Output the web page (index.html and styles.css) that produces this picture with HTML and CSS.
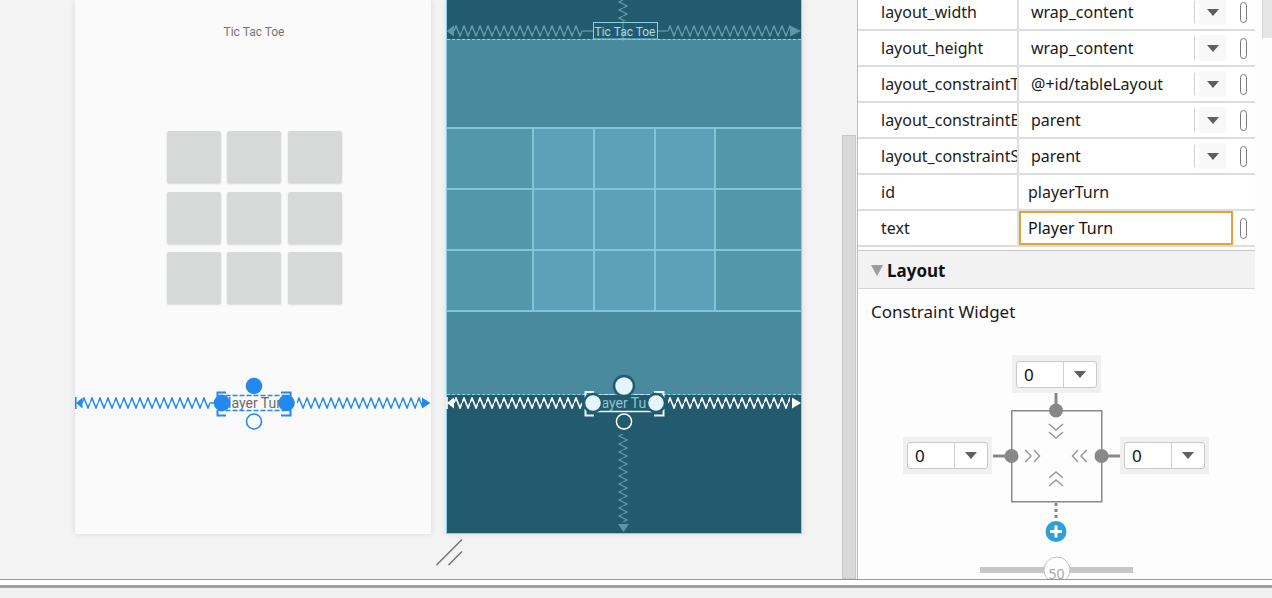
FILE: index.html
```html
<!DOCTYPE html>
<html>
<head>
<meta charset="utf-8">
<title>Layout editor</title>
<link rel="stylesheet" href="styles.css">
</head>
<body>
<div class="main">
  <div class="canvas">
    <div class="screen design">
      <div class="d-title">Tic Tac Toe</div>
      <div class="d-grid">
        <div class="d-btn"></div><div class="d-btn"></div><div class="d-btn"></div>
        <div class="d-btn"></div><div class="d-btn"></div><div class="d-btn"></div>
        <div class="d-btn"></div><div class="d-btn"></div><div class="d-btn"></div>
      </div>
      <svg class="overlay" width="356" height="534" viewBox="0 0 356 534">
        <defs>
          <pattern id="zzBlue" width="8" height="12" patternUnits="userSpaceOnUse">
            <polyline points="0,6 2,1 6,11 8,6" fill="none" stroke="#2389ee" stroke-width="1.5"/>
          </pattern>
        </defs>
        <line x1="0.8" y1="397" x2="0.8" y2="409" stroke="#2389ee" stroke-width="1.6"/>
        <polygon points="1,403 7.5,397.5 7.5,408.5" fill="#2389ee"/>
        <g transform="translate(7,397)"><rect width="128" height="12" fill="url(#zzBlue)"/></g>
        <line x1="135" y1="403" x2="142" y2="403" stroke="#2389ee" stroke-width="1.5"/>
        <g transform="translate(222,397)"><rect width="125" height="12" fill="url(#zzBlue)"/></g>
        <polygon points="347,397.5 355.5,403 347,408.5" fill="#2389ee"/>
        <text x="179" y="408" text-anchor="middle" class="sv-text" fill="#6b6b6b">Player Turn</text>
        <rect x="143.5" y="395.5" width="72" height="15" fill="none" stroke="#2389ee" stroke-width="1.5" stroke-dasharray="5 2"/>
        <polyline points="142.5,398 142.5,392.5 151,392.5" fill="none" stroke="#2389ee" stroke-width="2"/>
        <polyline points="142.5,410 142.5,415.5 151,415.5" fill="none" stroke="#2389ee" stroke-width="2"/>
        <polyline points="206,392.5 215.5,392.5 215.5,398" fill="none" stroke="#2389ee" stroke-width="2"/>
        <polyline points="206,415.5 215.5,415.5 215.5,410" fill="none" stroke="#2389ee" stroke-width="2"/>
        <circle cx="147" cy="403" r="8.3" fill="#2389ee"/>
        <circle cx="211.5" cy="403" r="8.3" fill="#2389ee"/>
        <circle cx="179" cy="386" r="8.3" fill="#2389ee"/>
        <circle cx="179" cy="421.5" r="7.5" fill="#fafafa" stroke="#2389ee" stroke-width="1.6"/>
      </svg>
    </div>

    <div class="screen blueprint">
      <div class="bp-top"></div>
      <div class="bp-table">
        <div class="bp-pad-top"></div>
        <div class="bp-row">
          <div class="bp-cell side first"></div><div class="bp-cell mid c2"></div><div class="bp-cell mid c3"></div><div class="bp-cell mid c4"></div><div class="bp-cell side last"></div>
        </div>
        <div class="bp-row">
          <div class="bp-cell side first"></div><div class="bp-cell mid c2"></div><div class="bp-cell mid c3"></div><div class="bp-cell mid c4"></div><div class="bp-cell side last"></div>
        </div>
        <div class="bp-row">
          <div class="bp-cell side first"></div><div class="bp-cell mid c2"></div><div class="bp-cell mid c3"></div><div class="bp-cell mid c4"></div><div class="bp-cell side last"></div>
        </div>
        <div class="bp-pad-bottom"></div>
      </div>
      <div class="bp-bottom"></div>
      <svg class="overlay bp-overlay" width="356" height="534" viewBox="0 0 356 534">
        <defs>
          <pattern id="zzMuted" width="8" height="12" patternUnits="userSpaceOnUse">
            <polyline points="0,6 2,1 6,11 8,6" fill="none" stroke="#6a9fb0" stroke-width="1.3"/>
          </pattern>
          <pattern id="zzMutedV" width="12" height="8" patternUnits="userSpaceOnUse">
            <polyline points="6,0 2,2 10,6 6,8" fill="none" stroke="#5f95a7" stroke-width="1.3"/>
          </pattern>
          <pattern id="zzWhite" width="8" height="12" patternUnits="userSpaceOnUse">
            <polyline points="0,6 2,1 6,11 8,6" fill="none" stroke="#ffffff" stroke-width="1.6"/>
          </pattern>
        </defs>
        <g transform="translate(171,0)"><rect width="12" height="21" fill="url(#zzMutedV)"/></g>
        <line x1="177" y1="21" x2="177" y2="38" stroke="#6a9fb0" stroke-width="1"/>
        <polygon points="174,38 180,38 177,42" fill="#6a9fb0"/>
        <polygon points="0.5,31 8,25.5 8,36.5" fill="#5f95a7"/>
        <g transform="translate(8,25)"><rect width="128" height="12" fill="url(#zzMuted)"/></g>
        <line x1="136" y1="31" x2="147" y2="31" stroke="#6a9fb0" stroke-width="1.2"/>
        <line x1="212" y1="31" x2="222" y2="31" stroke="#6a9fb0" stroke-width="1.2"/>
        <g transform="translate(222,25)"><rect width="122" height="12" fill="url(#zzMuted)"/></g>
        <polygon points="344,25.5 355,31 344,36.5" fill="#5f95a7"/>
        <rect x="147.5" y="22.5" width="64" height="16.5" fill="none" stroke="#8ad0e6" stroke-width="1"/>
        <text x="179" y="35.5" text-anchor="middle" class="sv-text small" fill="#a3dcec">Tic Tac Toe</text>

        <line x1="1" y1="397" x2="1" y2="409" stroke="#ffffff" stroke-width="1.6"/>
        <polygon points="1,403 8,397.5 8,408.5" fill="#ffffff"/>
        <g transform="translate(8,397)"><rect width="128" height="12" fill="url(#zzWhite)"/></g>
        <g transform="translate(222,397)"><rect width="122" height="12" fill="url(#zzWhite)"/></g>
        <polygon points="346,397.5 355,403 346,408.5" fill="#ffffff"/>
        <text x="178" y="408" text-anchor="middle" class="sv-text" fill="#8cc3d3">Player Turn</text>
        <line x1="146" y1="394.5" x2="210" y2="394.5" stroke="#b8e4f0" stroke-width="1" stroke-dasharray="4 2"/>
        <line x1="146" y1="411.5" x2="210" y2="411.5" stroke="#e8f7fc" stroke-width="1.5"/>
        <polyline points="139.5,398 139.5,392 148,392" fill="none" stroke="#e8f7fc" stroke-width="2"/>
        <polyline points="139.5,409 139.5,415.5 148,415.5" fill="none" stroke="#e8f7fc" stroke-width="2"/>
        <polyline points="208,392 217.5,392 217.5,398" fill="none" stroke="#e8f7fc" stroke-width="2"/>
        <polyline points="208,415.5 217.5,415.5 217.5,409" fill="none" stroke="#e8f7fc" stroke-width="2"/>
        <circle cx="147" cy="403" r="9" fill="#e4f6fc" stroke="#235b6e" stroke-width="2.5"/>
        <circle cx="210" cy="403" r="9" fill="#e4f6fc" stroke="#235b6e" stroke-width="2.5"/>
        <circle cx="178" cy="386" r="10" fill="#e4f6fc" stroke="#235b6e" stroke-width="2.5"/>
        <circle cx="178" cy="421.5" r="7.6" fill="none" stroke="#ffffff" stroke-width="1.5"/>
        <g transform="translate(171,434)"><rect width="12" height="88" fill="url(#zzMutedV)"/></g>
        <polygon points="172,524 183,524 177.5,532" fill="#5f95a7"/>
      </svg>
    </div>

    <div class="vscroll"></div>
    <svg class="resize" width="27" height="27" viewBox="0 0 27 27">
      <line x1="0.5" y1="26" x2="26" y2="0.5" stroke="#707070" stroke-width="1.4"/>
      <line x1="12.5" y1="26" x2="26" y2="12.5" stroke="#707070" stroke-width="1.4"/>
    </svg>
  </div>

  <div class="attrs">
    <div class="attr-list">
      <div class="row">
        <div class="name">layout_width</div>
        <div class="value"><span class="vtext">wrap_content</span><span class="sep"></span><span class="arrowbox"><span class="tri"></span></span><span class="oval"></span></div>
      </div>
      <div class="row">
        <div class="name">layout_height</div>
        <div class="value"><span class="vtext">wrap_content</span><span class="sep"></span><span class="arrowbox"><span class="tri"></span></span><span class="oval"></span></div>
      </div>
      <div class="row">
        <div class="name">layout_constraintT</div>
        <div class="value"><span class="vtext">@+id/tableLayout</span><span class="sep"></span><span class="arrowbox"><span class="tri"></span></span><span class="oval"></span></div>
      </div>
      <div class="row">
        <div class="name">layout_constraintE</div>
        <div class="value"><span class="vtext">parent</span><span class="sep"></span><span class="arrowbox"><span class="tri"></span></span><span class="oval"></span></div>
      </div>
      <div class="row">
        <div class="name">layout_constraintS</div>
        <div class="value"><span class="vtext">parent</span><span class="sep"></span><span class="arrowbox"><span class="tri"></span></span><span class="oval"></span></div>
      </div>
      <div class="row">
        <div class="name">id</div>
        <div class="value"><span class="vtext plain">playerTurn</span></div>
      </div>
      <div class="row">
        <div class="name">text</div>
        <div class="value"><span class="tf">Player Turn</span><span class="oval"></span></div>
      </div>
    </div>

    <div class="section"><span class="sec-tri"></span><span class="sec-title">Layout</span></div>
    <div class="cw-label">Constraint Widget</div>

    <div class="cw">
      <div class="dd dd-top"><div class="dd-in"><span class="dd-val">0</span><span class="dd-arrow"><span class="tri small"></span></span></div></div>
      <div class="dd dd-left"><div class="dd-in"><span class="dd-val">0</span><span class="dd-arrow"><span class="tri small"></span></span></div></div>
      <svg class="cw-svg" width="127" height="152" viewBox="0 0 127 152">
        <line x1="63" y1="0" x2="63" y2="17" stroke="#888" stroke-width="3"/>
        <line x1="0" y1="63" x2="18" y2="63" stroke="#888" stroke-width="3"/>
        <line x1="108" y1="63" x2="127" y2="63" stroke="#888" stroke-width="3"/>
        <rect x="18.75" y="17.75" width="90" height="91" fill="none" stroke="#8a8a8a" stroke-width="1.5"/>
        <circle cx="63" cy="17.5" r="7" fill="#888"/>
        <circle cx="18.5" cy="63" r="7" fill="#888"/>
        <circle cx="108.5" cy="63" r="7" fill="#888"/>
        <g fill="none" stroke="#9a9a9a" stroke-width="1.5">
          <polyline points="32.5,57 38,63 32.5,69"/>
          <polyline points="41,57 46.5,63 41,69"/>
          <polyline points="85,57 79.5,63 85,69"/>
          <polyline points="93.5,57 88,63 93.5,69"/>
          <polyline points="56,31 63,37 70,31"/>
          <polyline points="56,39 63,45 70,39"/>
          <polyline points="56,85 63,79 70,85"/>
          <polyline points="56,93 63,87 70,93"/>
        </g>
        <line x1="63" y1="110" x2="63" y2="127" stroke="#888" stroke-width="3" stroke-dasharray="3 3"/>
        <circle cx="63" cy="138.5" r="10.5" fill="#2d9fd9"/>
        <line x1="57" y1="138.5" x2="69" y2="138.5" stroke="#fff" stroke-width="3"/>
        <line x1="63" y1="132.5" x2="63" y2="144.5" stroke="#fff" stroke-width="3"/>
      </svg>
      <div class="dd dd-right"><div class="dd-in"><span class="dd-val">0</span><span class="dd-arrow"><span class="tri small"></span></span></div></div>
    </div>

    <div class="slider"><div class="thumb">50</div></div>
    <div class="pscroll"></div>
  </div>
</div>
<div class="statusbar"></div>
</body>
</html>
```

FILE: styles.css
```css
* { box-sizing: border-box; }
html, body { margin: 0; padding: 0; }
body {
  width: 1272px;
  height: 598px;
  overflow: hidden;
  background: #f0f0f0;
  font-family: "Noto Sans", "DejaVu Sans", sans-serif;
  color: #1e1e1e;
}

.main {
  display: flex;
  height: 579px;
  overflow: hidden;
}

/* ---------- design canvas ---------- */
.canvas {
  position: relative;
  width: 857px;
  flex: none;
  background: #f3f3f3;
  display: flex;
  align-items: flex-start;
  gap: 15px;
  padding-left: 75px;
  padding-right: 1px;
}

.screen {
  position: relative;
  width: 356px;
  height: 534px;
  flex: none;
}

.overlay {
  position: absolute;
  left: 0;
  top: 0;
  overflow: visible;
}

.sv-text {
  font-family: Roboto, "Noto Sans", sans-serif;
  font-size: 14px;
}
.sv-text.small { font-size: 12px; }

.design {
  background: #fafafa;
  box-shadow: 0 0 6px rgba(0, 0, 0, 0.10);
  display: flex;
  flex-direction: column;
  align-items: center;
}

.d-title {
  margin-top: 24px;
  font-family: Roboto, "Noto Sans", sans-serif;
  font-size: 12px;
  line-height: 16px;
  color: #767676;
  padding-left: 2px;
}

.d-grid {
  margin-top: 91px;
  margin-left: 2px;
  display: grid;
  grid-template-columns: repeat(3, 54px);
  grid-auto-rows: 52px;
  column-gap: 6.5px;
  row-gap: 8.5px;
}

.d-btn {
  background: #d7d8d8;
  border-radius: 2px;
  box-shadow: 0 1px 2px rgba(0, 0, 0, 0.14);
}

/* blueprint */
.blueprint {
  background: #235b6e;
  border-left: 1px solid #82cfe6;
  border-right: 1px solid #82cfe6;
  border-bottom: 1px solid #82cfe6;
  box-shadow: 0 0 6px rgba(0, 0, 0, 0.10);
  display: flex;
  flex-direction: column;
}

.bp-overlay { left: -1px; }

.bp-top { height: 39px; flex: none; }

.bp-table {
  background: #4a8a9e;
  border-top: 1px dashed #8ad3ea;
  border-bottom: 1px dashed #8ad3ea;
  display: flex;
  flex-direction: column;
  flex: none;
}

.bp-pad-top { height: 87px; }
.bp-pad-bottom { height: 84px; border-top: 2px solid #7fc6dc; }

.bp-row {
  display: flex;
  height: 61px;
  border-top: 2px solid #7fc6dc;
}

.bp-cell { height: 100%; border-right: 2px solid #7fc6dc; }
.bp-cell.side { background: #5496aa; }
.bp-cell.mid { background: #5ea0b8; }
.bp-cell.first { width: 87px; }
.bp-cell.c2 { width: 61px; }
.bp-cell.c3 { width: 61px; }
.bp-cell.c4 { width: 60px; }
.bp-cell.last { flex: 1; border-right: none; }

.bp-bottom { flex: 1; }

.vscroll {
  margin-left: auto;
  margin-top: 135px;
  width: 14px;
  height: 444px;
  background: #d9d9d9;
  border: 1px solid #c8c8c8;
  flex: none;
}

.resize {
  position: absolute;
  left: 436px;
  top: 539px;
}

/* ---------- attributes panel ---------- */
.attrs {
  position: relative;
  flex: 1;
  background: #fdfdfd;
  border-left: 1px solid #bdbdbd;
  font-size: 16px;
}

.attr-list {
  width: 397px;
  margin-top: -5px;
  background: #ffffff;
}

.row {
  display: flex;
  height: 36px;
  border-bottom: 2px solid #dddddd;
}

.name {
  width: 161px;
  flex: none;
  padding-left: 23px;
  border-right: 2px solid #dddddd;
  display: flex;
  align-items: center;
  white-space: nowrap;
  overflow: hidden;
  color: #222;
}

.value {
  flex: 1;
  display: flex;
  align-items: center;
  min-width: 0;
}

.vtext {
  flex: 1;
  padding-left: 12px;
  white-space: nowrap;
  color: #1a1a1a;
}
.vtext.plain { padding-left: 9px; }

.sep {
  width: 1px;
  height: 22px;
  background: #cfcfcf;
  flex: none;
}

.arrowbox {
  width: 27px;
  height: 26px;
  margin-left: 4px;
  background: #f8f8f8;
  display: flex;
  align-items: center;
  justify-content: center;
  flex: none;
}

.tri {
  width: 0;
  height: 0;
  border-left: 6px solid transparent;
  border-right: 6px solid transparent;
  border-top: 7px solid #5f5f5f;
}
.tri.small {
  border-left-width: 6.5px;
  border-right-width: 6.5px;
  border-top-width: 7px;
}

.oval {
  width: 7px;
  height: 21px;
  border: 1.5px solid #787878;
  border-radius: 4px;
  margin-left: 14px;
  margin-right: 8px;
  flex: none;
}

.tf {
  width: 214px;
  height: 34px;
  border: 2px solid #e6a23a;
  padding-left: 7px;
  display: flex;
  align-items: center;
  flex: none;
  color: #111;
}
.tf + .oval { margin-left: 7px; }

.section {
  width: 397px;
  margin-top: 3px;
  height: 39px;
  background: #f2f2f2;
  border-top: 1px solid #c9c9c9;
  border-bottom: 1px solid #d6d6d6;
  display: flex;
  align-items: center;
  padding-left: 13px;
}

.sec-tri {
  width: 0;
  height: 0;
  border-left: 6px solid transparent;
  border-right: 6px solid transparent;
  border-top: 11px solid #9c9c9c;
  margin-right: 4px;
  margin-top: 2px;
}

.sec-title {
  font-weight: bold;
  font-size: 17px;
  color: #111;
  margin-top: 2px;
}

.cw-label {
  margin-top: 10px;
  margin-left: 13px;
  line-height: 25px;
  font-size: 17px;
  color: #1a1a1a;
}

.cw {
  width: 307px;
  margin: 31px 0 0 45px;
  display: grid;
  grid-template-columns: 90px 127px 90px;
  grid-template-rows: 38px auto;
}

.cw-svg { grid-column: 2; grid-row: 2; display: block; }

.dd {
  width: 89px;
  height: 37px;
  background: #f0f0f0;
  padding: 5px 4px;
}
.dd-top { grid-column: 2; grid-row: 1; justify-self: center; height: 38px; padding-top: 6px; }
.dd-left { grid-column: 1; grid-row: 2; margin-top: 44px; }
.dd-right { grid-column: 3; grid-row: 2; margin-top: 44px; }

.dd-in {
  height: 27px;
  background: #fff;
  border: 1px solid #c9c9c9;
  border-radius: 3px;
  display: flex;
}

.dd-val {
  width: 46px;
  padding-left: 7px;
  font-size: 17px;
  line-height: 25px;
  color: #111;
}

.dd-arrow {
  flex: 1;
  border-left: 1px solid #d0d0d0;
  display: flex;
  align-items: center;
  justify-content: center;
}

.slider {
  position: relative;
  width: 153px;
  height: 6px;
  margin: 22px 0 0 122px;
  background: #c6c6c6;
}

.thumb {
  position: absolute;
  left: 50%;
  top: 50%;
  width: 27px;
  height: 27px;
  transform: translate(-50%, -50%);
  border-radius: 50%;
  background: #fff;
  border: 1px solid #c4c4c4;
  font-size: 14px;
  color: #a8a8a8;
  display: flex;
  align-items: center;
  justify-content: center;
  padding-top: 6px;
}

.pscroll {
  position: absolute;
  right: 0;
  top: 0;
  width: 10px;
  height: 38px;
  background: #e6e6e6;
  border-left: 1px solid #d6d6d6;
}

/* ---------- bottom ---------- */
.statusbar {
  height: 19px;
  border-top: 1px solid #9a9a9a;
  background: linear-gradient(#ffffff 0, #ffffff 5px, #a0a0a0 5px, #a0a0a0 8px, #f0f0f0 8px);
}
```
